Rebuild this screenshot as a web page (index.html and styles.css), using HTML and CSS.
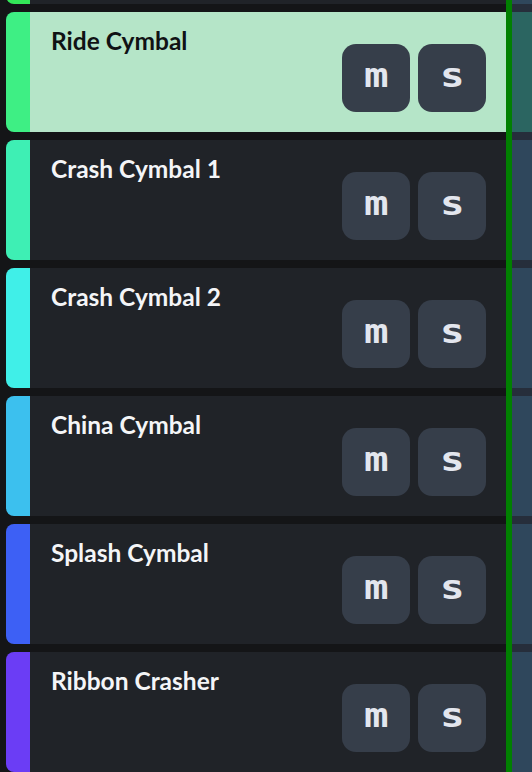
FILE: index.html
```html
<!DOCTYPE html>
<html>
<head>
<meta charset="utf-8">
<link rel="stylesheet" href="styles.css">
</head>
<body>
<div class="tracks">
  <div class="track">
    <div class="bar bar-0"></div>
    <div class="main"></div>
    <div class="lane"></div>
  </div>
  <div class="track selected">
    <div class="bar bar-1"></div>
    <div class="main"><div class="name">Ride Cymbal</div><div class="btns"><button class="btn"><span class="glyph">m</span></button><button class="btn"><span class="glyph">s</span></button></div></div>
    <div class="lane"></div>
  </div>
  <div class="track">
    <div class="bar bar-2"></div>
    <div class="main"><div class="name">Crash Cymbal 1</div><div class="btns"><button class="btn"><span class="glyph">m</span></button><button class="btn"><span class="glyph">s</span></button></div></div>
    <div class="lane"></div>
  </div>
  <div class="track">
    <div class="bar bar-3"></div>
    <div class="main"><div class="name">Crash Cymbal 2</div><div class="btns"><button class="btn"><span class="glyph">m</span></button><button class="btn"><span class="glyph">s</span></button></div></div>
    <div class="lane"></div>
  </div>
  <div class="track">
    <div class="bar bar-4"></div>
    <div class="main"><div class="name">China Cymbal</div><div class="btns"><button class="btn"><span class="glyph">m</span></button><button class="btn"><span class="glyph">s</span></button></div></div>
    <div class="lane"></div>
  </div>
  <div class="track">
    <div class="bar bar-5"></div>
    <div class="main"><div class="name">Splash Cymbal</div><div class="btns"><button class="btn"><span class="glyph">m</span></button><button class="btn"><span class="glyph">s</span></button></div></div>
    <div class="lane"></div>
  </div>
  <div class="track">
    <div class="bar bar-6"></div>
    <div class="main"><div class="name">Ribbon Crasher</div><div class="btns"><button class="btn"><span class="glyph">m</span></button><button class="btn"><span class="glyph">s</span></button></div></div>
    <div class="lane"></div>
  </div>
</div>
<div class="playhead"></div>
</body>
</html>
```
FILE: styles.css
```css
html, body {
  margin: 0;
  padding: 0;
  height: 100%;
  overflow: hidden;
}
body {
  background: linear-gradient(to right, #141517 512px, #262e3b 512px);
  font-family: Lato, "Noto Sans", sans-serif;
  position: relative;
}
.tracks {
  display: flex;
  flex-direction: column;
  gap: 8px;
  margin-top: -116px;
  padding-left: 6px;
}
.track {
  display: flex;
  height: 120px;
  border-radius: 8px 0 0 8px;
  overflow: hidden;
  background: #202328;
}
.bar {
  width: 24px;
  flex: none;
}
.bar-0 { background: #33e858; }
.bar-1 { background: #3eef84; }
.bar-2 { background: #3eefb4; }
.bar-3 { background: #40efe8; }
.bar-4 { background: #3cc0ee; }
.bar-5 { background: #3d60f5; }
.bar-6 { background: #6b3df5; }
.main {
  flex: 1;
  display: flex;
  justify-content: space-between;
  padding: 15px 26px 20px 21px;
}
.name {
  font-size: 24.5px;
  font-weight: 700;
  line-height: 28px;
  color: #f4f5f7;
}
.selected .main { background: #b5e5c8; }
.selected .name { color: #101214; }
.btns {
  display: flex;
  gap: 8px;
  align-self: flex-end;
  margin-left: auto;
}
.btn {
  width: 68px;
  height: 68px;
  border: none;
  border-radius: 14px;
  background: #363e4a;
  padding: 0;
  display: flex;
  align-items: center;
  justify-content: center;
}
.glyph {
  display: block;
  color: #e3e6ee;
  font-family: "DejaVu Sans Mono", monospace;
  font-weight: 700;
  font-size: 34px;
  line-height: 34px;
  height: 34px;
  transform: translateY(-3px) scaleX(1.2);
}
.lane {
  width: 20px;
  flex: none;
  background: #2f475c;
}
.selected .lane { background: #2b6561; }
.playhead {
  position: absolute;
  top: 0;
  left: 506px;
  width: 6px;
  height: 100%;
  background: #018001;
}
```
